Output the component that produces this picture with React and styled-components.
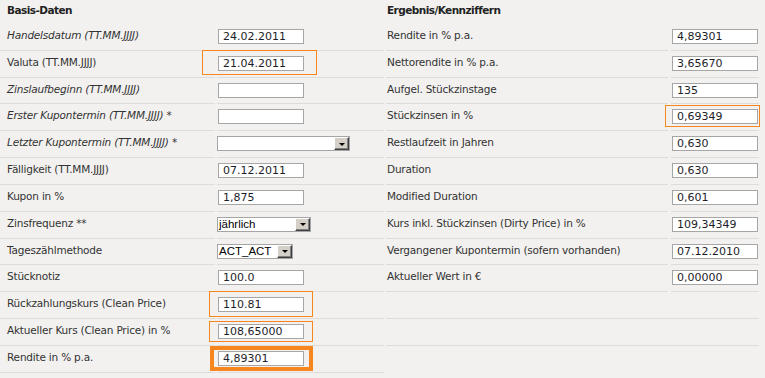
import React from 'react';
import styled, { createGlobalStyle } from 'styled-components';

const GlobalStyle = createGlobalStyle`
  html, body {
    margin: 0;
    padding: 0;
    background: #f2f1ef;
  }
  body {
    font-family: 'DejaVu Sans', Verdana, sans-serif;
    color: #333;
  }
`;

const Page = styled.div`
  display: grid;
  grid-template-columns: 384px 373px;
  column-gap: 2px;
  width: 759px;
`;

const Section = styled.section`
  display: flex;
  flex-direction: column;
`;

const Heading = styled.h2`
  margin: 0;
  height: 24px;
  box-sizing: border-box;
  padding: 4px 0 0 ${(p) => p.$indent}px;
  font-size: 10.5px;
  line-height: 13px;
  font-weight: bold;
  letter-spacing: -0.55px;
  color: #222;
`;

const Table = styled.div`
  display: grid;
  grid-template-columns: ${(p) => p.$cols};
  column-gap: ${(p) => p.$gap}px;
  grid-auto-rows: 26.83px;
`;

const Cell = styled.div`
  box-sizing: border-box;
  border-bottom: 1px solid #dddcd9;
`;

const Label = styled(Cell)`
  padding: 5px 0 0 ${(p) => p.$indent}px;
  font-size: 10.5px;
  line-height: 13px;
  letter-spacing: -0.2px;
  font-style: ${(p) => (p.$italic ? 'italic' : 'normal')};
  white-space: nowrap;
`;

const Value = styled(Cell)`
  padding: 5px 0 0 1px;
`;

const Blank = styled(Cell)`
  grid-column: 1 / -1;
`;

const Field = styled.span`
  position: relative;
  display: inline-block;
  vertical-align: top;
`;

const Input = styled.input`
  display: block;
  box-sizing: border-box;
  width: 86px;
  height: 15px;
  margin: 0;
  padding: 0 0 0 4px;
  border: 1px solid #a6a6a6;
  background: #fff;
  font-family: 'DejaVu Sans', Verdana, sans-serif;
  font-size: 11px;
  line-height: 13px;
  color: #1e1e28;
  outline: none;
`;

const Highlight = styled.span`
  position: absolute;
  top: ${(p) => -p.$t}px;
  bottom: ${(p) => -p.$b}px;
  left: ${(p) => -p.$l}px;
  right: ${(p) => -p.$r}px;
  border: ${(p) => p.$w || 1}px solid #f7861e;
  pointer-events: none;
`;

const SelectBox = styled.div`
  display: flex;
  box-sizing: border-box;
  width: ${(p) => p.$width}px;
  height: 15px;
  margin-left: -1px;
  border: 1px solid #a5a5a5;
  background: #fff;
`;

const SelectText = styled.span`
  flex: 1;
  padding-left: 1px;
  font-family: 'Liberation Sans', Arial, sans-serif;
  font-size: 11.5px;
  line-height: 13px;
  color: #000;
  overflow: hidden;
`;

const DropButton = styled.span`
  display: flex;
  align-items: center;
  justify-content: center;
  box-sizing: border-box;
  width: 15px;
  background: #d4d0c8;
  border: 1px solid;
  border-color: #ffffff #404040 #404040 #ffffff;
  box-shadow: inset -1px -1px 0 #808080;

  &::after {
    content: '';
    margin-top: 1px;
    border-left: 3px solid transparent;
    border-right: 3px solid transparent;
    border-top: 3px solid #000;
  }
`;

const basis = [
  { label: 'Handelsdatum (TT.MM.JJJJ)', italic: true, value: '24.02.2011' },
  { label: 'Valuta (TT.MM.JJJJ)', value: '21.04.2011', mark: { l: 16, r: 13, t: 6, b: 4 } },
  { label: 'Zinslaufbeginn (TT.MM.JJJJ)', italic: true, value: '' },
  { label: 'Erster Kupontermin (TT.MM.JJJJ) *', italic: true, value: '' },
  { label: 'Letzter Kupontermin (TT.MM.JJJJ) *', italic: true, select: '', width: 133 },
  { label: 'Fälligkeit (TT.MM.JJJJ)', value: '07.12.2011' },
  { label: 'Kupon in %', value: '1,875' },
  { label: 'Zinsfrequenz **', select: 'jährlich', width: 94 },
  { label: 'Tageszählmethode', select: 'ACT_ACT', width: 76 },
  { label: 'Stücknotiz', value: '100.0' },
  { label: 'Rückzahlungskurs (Clean Price)', value: '110.81', mark: { l: 9, r: 9, t: 6, b: 5 } },
  { label: 'Aktueller Kurs (Clean Price) in %', value: '108,65000', mark: { l: 9, r: 9, t: 3, b: 3 } },
  { label: 'Rendite in % p.a.', value: '4,89301', mark: { l: 8, r: 9, t: 5, b: 5, w: 4 } },
];

const results = [
  { label: 'Rendite in % p.a.', value: '4,89301' },
  { label: 'Nettorendite in % p.a.', value: '3,65670' },
  { label: 'Aufgel. Stückzinstage', value: '135' },
  { label: 'Stückzinsen in %', value: '0,69349', mark: { l: 7, r: 2, t: 4, b: 3 } },
  { label: 'Restlaufzeit in Jahren', value: '0,630' },
  { label: 'Duration', value: '0,630' },
  { label: 'Modified Duration', value: '0,601' },
  { label: 'Kurs inkl. Stückzinsen (Dirty Price) in %', value: '109,34349' },
  { label: 'Vergangener Kupontermin (sofern vorhanden)', value: '07.12.2010' },
  { label: 'Aktueller Wert in €', value: '0,00000' },
];

function Row({ row, indent }) {
  return (
    <>
      <Label $indent={indent} $italic={row.italic}>{row.label}</Label>
      <Value>
        {row.select !== undefined ? (
          <SelectBox $width={row.width}>
            <SelectText>{row.select}</SelectText>
            <DropButton />
          </SelectBox>
        ) : (
          <Field>
            <Input readOnly value={row.value} />
            {row.mark ? (
              <Highlight $l={row.mark.l} $r={row.mark.r} $t={row.mark.t} $b={row.mark.b} $w={row.mark.w} />
            ) : null}
          </Field>
        )}
      </Value>
    </>
  );
}

function App() {
  return (
    <>
      <GlobalStyle />
      <Page>
        <Section>
          <Heading $indent={7}>Basis-Daten</Heading>
          <Table $cols="215px 167px" $gap={2}>
            {basis.map((row) => (
              <Row key={row.label} row={row} indent={7} />
            ))}
          </Table>
        </Section>
        <Section>
          <Heading $indent={1}>Ergebnis/Kennziffern</Heading>
          <Table $cols="282px 88px" $gap={3}>
            {results.map((row) => (
              <Row key={row.label} row={row} indent={1} />
            ))}
            <Blank />
            <Blank />
          </Table>
        </Section>
      </Page>
    </>
  );
}

export default App;
